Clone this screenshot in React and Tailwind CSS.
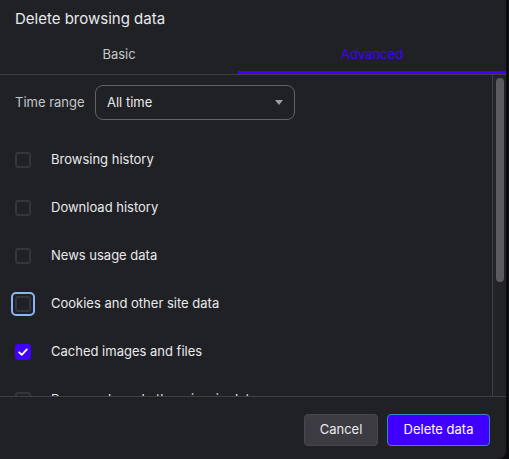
import React from "react";

const items = [
    { label: "Browsing history", checked: false },
    { label: "Download history", checked: false },
    { label: "News usage data", checked: false },
    { label: "Cookies and other site data", checked: false, focused: true },
    { label: "Cached images and files", checked: true },
    { label: "Passwords and other sign-in data", checked: false },
];

const Checkbox = ({ checked, focused }) => {
    const box = checked ? (
        <span className="w-4 h-4 rounded-[3px] bg-[#3f00ff] flex items-center justify-center">
            <svg width="12" height="12" viewBox="0 0 12 12" fill="none">
                <path d="M2.2 6.3 L4.8 8.8 L9.8 3.4" stroke="white" strokeWidth="1.8" strokeLinecap="round" strokeLinejoin="round" />
            </svg>
        </span>
    ) : (
        <span className="w-4 h-4 rounded-[3px] border-2 border-[#35363a]" />
    );

    if (focused) {
        return (
            <span className="w-4 h-4 relative flex items-center justify-center">
                <span className="absolute -inset-1 rounded-[5px] border-2 border-[#8ab4f8]" />
                {box}
            </span>
        );
    }
    return box;
};

export default function App() {
    return (
        <div className="w-[509px] h-[459px] bg-[#0b0b0d] overflow-hidden" style={{ fontFamily: "Inter, 'Noto Sans', sans-serif" }}>
            <div className="w-[506px] h-[459px] bg-[#202124] rounded-br-lg flex flex-col text-[#e8eaed]">
                <div className="h-[36px] px-[15px] pt-[7px] text-[15px] leading-[24px]">Delete browsing data</div>

                <div className="h-[39px] flex border-b border-[#3c4043]">
                    <div className="w-[238px] flex items-center justify-center text-[13px] text-[#c4c7cc] pb-[1px] pt-[1px]">Basic</div>
                    <div className="flex-1 flex items-center justify-center text-[13px] text-[#3f00ff] border-b-[3px] border-[#3f00ff] pt-[3px]">Advanced</div>
                </div>

                <div className="h-[322px] flex border-b border-[#3c4043]">
                    <div className="flex-1 overflow-hidden">
                        <div className="flex items-center pt-[10px] px-[15px]">
                            <span className="text-[13px] text-[#c4c7cc] w-[80px] pt-[1px]">Time range</span>
                            <div className="w-[200px] h-[35px] rounded-lg border border-[#5f6368] flex items-center justify-between pl-[11px] pr-[11px]">
                                <span className="text-[13px] pt-[1px]">All time</span>
                                <svg width="8" height="5" viewBox="0 0 8 5">
                                    <path d="M0 0 H8 L4 5 Z" fill="#9aa0a6" />
                                </svg>
                            </div>
                        </div>
                        <div className="mt-[16px]">
                            {items.map(item => (
                                <div key={item.label} className="h-[48px] flex items-center pl-[15px]">
                                    <Checkbox checked={item.checked} focused={item.focused} />
                                    <span className="ml-[20px] text-[13px]">{item.label}</span>
                                </div>
                            ))}
                        </div>
                    </div>
                    <div className="w-[14px] border-l border-[#3c4043] bg-[#222326] pt-[3px] pl-[3px]">
                        <div className="w-[8px] h-[204px] rounded-full bg-[#5c5c5e]" />
                    </div>
                </div>

                <div className="flex-1 flex items-start justify-end gap-[9px] pr-[16px] pt-[17px]">
                    <button className="w-[74px] h-[32px] rounded bg-[#3c3b42] border border-[#48474e] text-[13px] text-[#e8eaed]">Cancel</button>
                    <button className="w-[103px] h-[32px] rounded bg-[#3f00ff] border border-[#3a86c0] text-[13px] text-white">Delete data</button>
                </div>
            </div>
        </div>
    );
}
